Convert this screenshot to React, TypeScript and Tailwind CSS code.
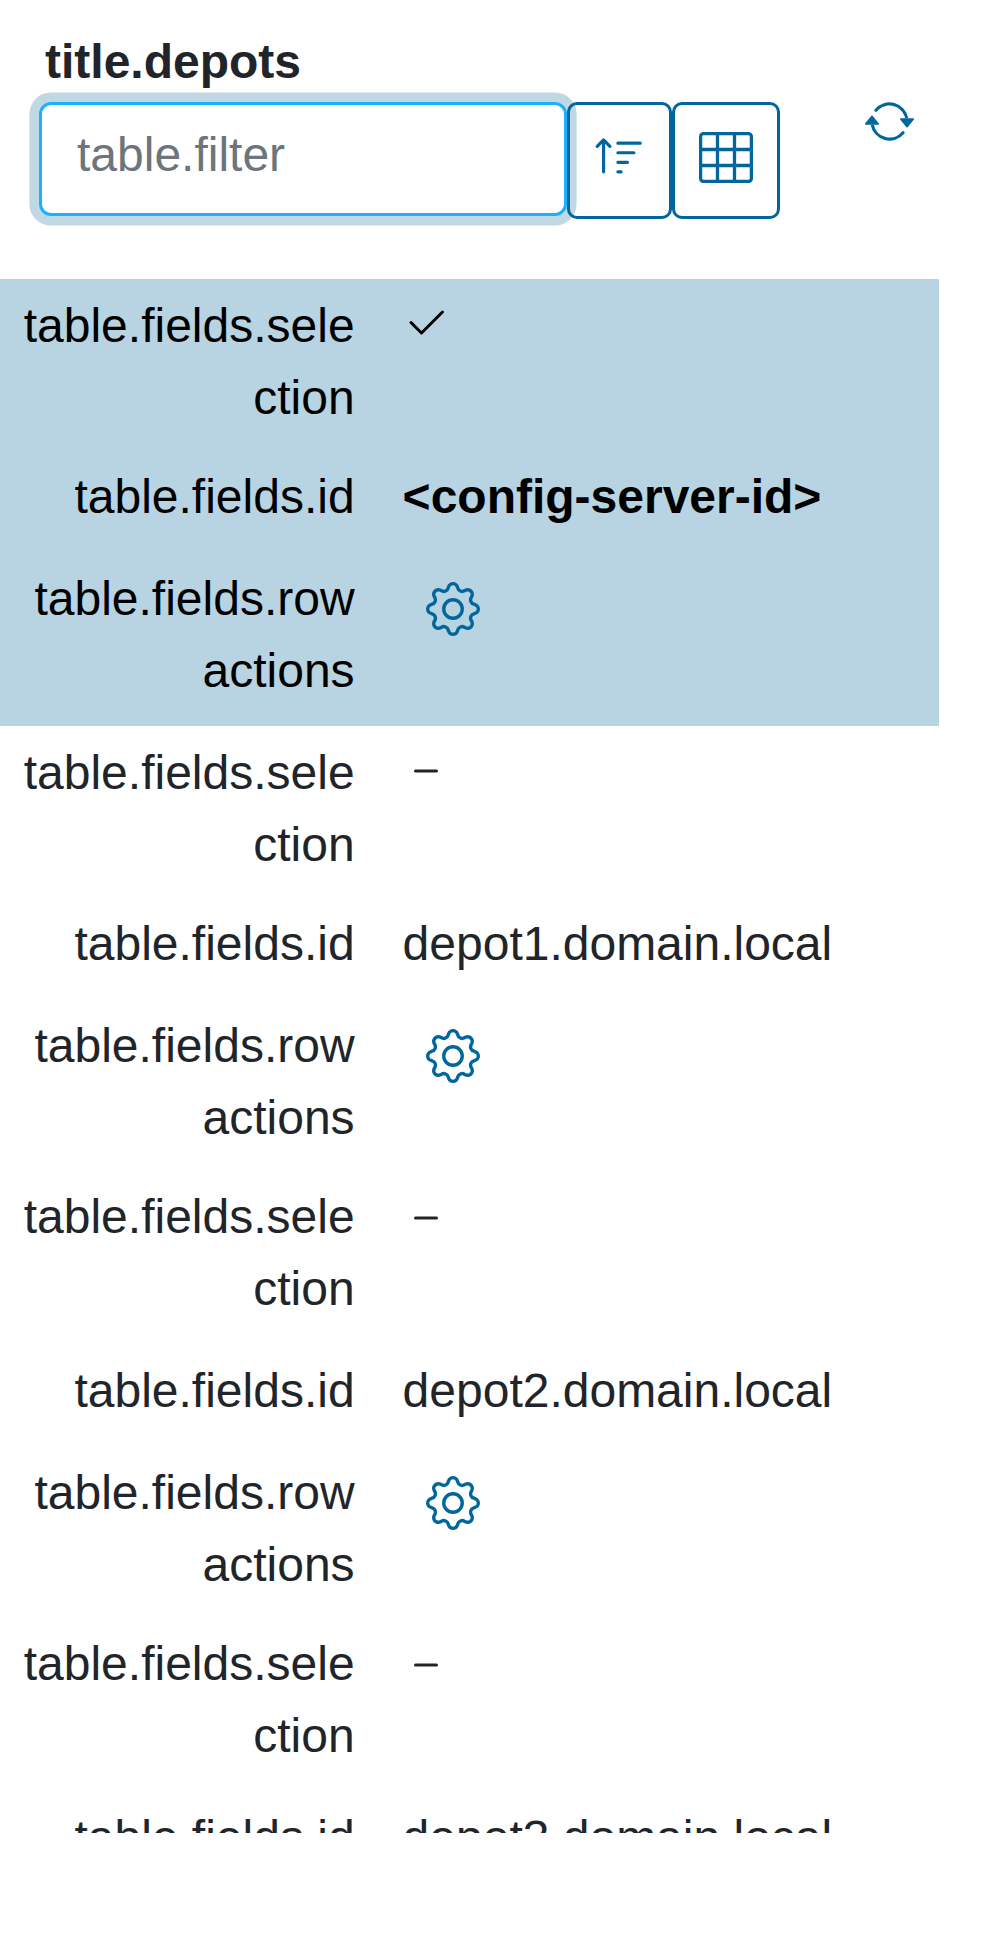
import { BsSortUp, BsArrowRepeat, BsCheck2, BsDash, BsGear } from 'react-icons/bs';

type Depot = { id: string; selected?: boolean; raised?: boolean };

const depots: Depot[] = [
  { id: '<config-server-id>', selected: true },
  { id: 'depot1.domain.local' },
  { id: 'depot2.domain.local', raised: true },
  { id: 'depot3.domain.local', raised: true },
];

function GridIcon() {
  return (
    <svg width="54" height="51" viewBox="0 0 54 51" fill="none" stroke="currentColor" strokeWidth="3.3">
      <rect x="1.6" y="1.6" width="50.8" height="47.8" rx="3" />
      <path d="M18.5 1.5v48M35.5 1.5v48M1.5 17.5h51M1.5 33.5h51" />
    </svg>
  );
}

function Label({ children }: { children: string }) {
  return <div className="w-[342.6px] shrink-0 break-all text-right">{children}</div>;
}

function DepotRows({ depot }: { depot: Depot }) {
  return (
    <div className={depot.selected ? 'h-[447px] w-[939px] bg-[#b8d3e1] text-black' : 'h-[447px] w-[939px]'}>
      <div className="flex h-[170px] gap-[47.4px] pl-3">
        <div className={depot.raised ? 'pt-2' : 'pt-[11px]'}>
          <Label>table.fields.selection</Label>
        </div>
        <div className="pt-[21px]">{depot.selected ? <BsCheck2 size={48} /> : <BsDash size={48} />}</div>
      </div>
      <div className="flex h-[99px] gap-12 pl-3 pt-3">
        <Label>table.fields.id</Label>
        <div className={depot.selected ? 'font-bold' : ''}>{depot.id}</div>
      </div>
      <div className="flex h-[178px] gap-[47.4px] pl-3 pt-[15px]">
        <Label>table.fields.rowactions</Label>
        <button className="h-[54px] pl-6 pt-[19px] text-[#00669b]">
          <BsGear size={54} />
        </button>
      </div>
    </div>
  );
}

export default function App() {
  return (
    <div className="h-[1953px] w-[984px] overflow-hidden bg-white font-['Liberation_Sans',sans-serif] text-[48px] leading-[72px] text-[#212529]">
      <header className="flex h-[279px] pt-[26px]">
        <div className="w-[780px] pl-[39px]">
          <h1 className="h-[76px] pl-1.5 font-bold">title.depots</h1>
          <div className="flex items-start">
            <input
              className="h-[114px] w-[528px] rounded-[12px] border-[3px] border-[#1ab2ff] bg-white px-[35px] pb-[9px] text-[48px] shadow-[0_0_0_9.6px_#c0d7e4] outline-none placeholder:text-[#6c757d] placeholder:opacity-100"
              placeholder="table.filter"
            />
            <button className="flex h-[117px] w-[105px] items-center justify-center rounded-[10px] border-[3px] border-[#00669b] pb-1.5 text-[#00669b]">
              <BsSortUp size={51} />
            </button>
            <button className="flex h-[117px] w-[108px] items-center justify-center rounded-[10px] border-[3px] border-[#00669b] pb-1.5 text-[#00669b]">
              <GridIcon />
            </button>
          </div>
        </div>
        <button className="ml-[84px] mt-[70px] h-[51px] text-[#00669b]">
          <BsArrowRepeat size={51} />
        </button>
      </header>
      <main className="h-[1554px] overflow-hidden">
        {depots.map((d) => (
          <DepotRows key={d.id} depot={d} />
        ))}
      </main>
    </div>
  );
}
